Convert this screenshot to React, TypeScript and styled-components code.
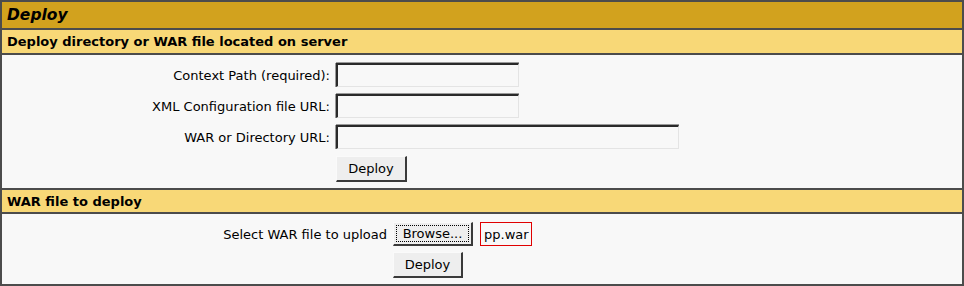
import React from "react"
import styled, { createGlobalStyle } from "styled-components"

const GlobalStyle = createGlobalStyle`
  html, body {
    margin: 0;
    padding: 0;
    background: #f8f8f8;
  }
  body {
    font-family: "DejaVu Sans", Verdana, sans-serif;
    color: #000;
  }
`

const Panel = styled.div`
  width: 964px;
  box-sizing: border-box;
  border: 2px solid #4c4c4c;
  border-bottom-width: 0;
  background: #f8f8f8;
`

const TitleBar = styled.div`
  height: 28px;
  box-sizing: border-box;
  padding: 0 5px;
  display: flex;
  align-items: center;
  background: #d2a21e;
  border-bottom: 2px solid #4c4c4c;
  font-size: 15.5px;
  font-weight: bold;
  font-style: italic;
`

const SectionHeader = styled.div<{ $h: number }>`
  height: ${(p) => p.$h}px;
  box-sizing: border-box;
  padding: 0 5px;
  display: flex;
  align-items: center;
  background: #f8d877;
  border-bottom: 2px solid #4c4c4c;
  font-size: 13px;
  font-weight: bold;
`

const SectionBody = styled.div<{ $h: number; $pad: number }>`
  height: ${(p) => p.$h}px;
  box-sizing: border-box;
  padding-top: ${(p) => p.$pad}px;
  border-bottom: 2px solid #4c4c4c;
`

const FormGrid = styled.div<{ $labelCol: number; $rowGap: number }>`
  display: grid;
  grid-template-columns: ${(p) => p.$labelCol}px auto;
  column-gap: 6px;
  row-gap: ${(p) => p.$rowGap}px;
  align-items: center;
  justify-content: start;
`

const Label = styled.label`
  text-align: right;
  font-size: 13px;
  white-space: nowrap;
`

const Field = styled.div`
  display: flex;
  align-items: center;
  gap: 7px;
  grid-column: 2;
`

const TextBox = styled.input<{ $w: number }>`
  width: ${(p) => p.$w}px;
  height: 24px;
  box-sizing: border-box;
  margin: 0;
  padding: 2px 3px;
  background: #f8f8f8;
  border-style: solid;
  border-width: 2px 1px 1px 2px;
  border-color: #2a2a2a #e4e4e4 #e4e4e4 #2a2a2a;
  box-shadow: 0 -1px 0 #9a9a9a, -1px 0 0 #9a9a9a;
  font-family: "DejaVu Sans", sans-serif;
  font-size: 13px;
  outline: none;
`

const Button = styled.button<{ $w: number; $h: number }>`
  position: relative;
  width: ${(p) => p.$w}px;
  height: ${(p) => p.$h}px;
  box-sizing: border-box;
  margin: 0;
  padding: 0;
  background: #eeeeee;
  border-style: solid;
  border-width: 1px 2px 2px 1px;
  border-color: #fafafa #3a3a3a #3a3a3a #fafafa;
  font-family: "DejaVu Sans", sans-serif;
  font-size: 13px;
  color: #000;
  cursor: pointer;
`

const FocusRing = styled.span`
  position: absolute;
  inset: 2px;
  border: 1px dotted #000;
  pointer-events: none;
`

const FileName = styled.span`
  display: inline-flex;
  align-items: center;
  height: 24px;
  box-sizing: border-box;
  padding: 0 2px 0 3px;
  border: 1px solid #e00000;
  font-size: 13px;
`

const App: React.FC = () => {
  return (
    <>
      <GlobalStyle />
      <Panel>
        <TitleBar>Deploy</TitleBar>
        <SectionHeader $h={25}>Deploy directory or WAR file located on server</SectionHeader>
        <SectionBody $h={135} $pad={8}>
          <FormGrid $labelCol={328} $rowGap={7}>
            <Label>Context Path (required):</Label>
            <Field>
              <TextBox $w={183} />
            </Field>
            <Label>XML Configuration file URL:</Label>
            <Field>
              <TextBox $w={183} />
            </Field>
            <Label>WAR or Directory URL:</Label>
            <Field>
              <TextBox $w={343} />
            </Field>
            <Field>
              <Button $w={71} $h={26}>Deploy</Button>
            </Field>
          </FormGrid>
        </SectionBody>
        <SectionHeader $h={24}>WAR file to deploy</SectionHeader>
        <SectionBody $h={72} $pad={8}>
          <FormGrid $labelCol={385} $rowGap={6}>
            <Label>Select WAR file to upload</Label>
            <Field>
              <Button $w={80} $h={24}>
                Browse...
                <FocusRing />
              </Button>
              <FileName>pp.war</FileName>
            </Field>
            <Field>
              <Button $w={70} $h={26}>Deploy</Button>
            </Field>
          </FormGrid>
        </SectionBody>
      </Panel>
    </>
  )
}

export default App
